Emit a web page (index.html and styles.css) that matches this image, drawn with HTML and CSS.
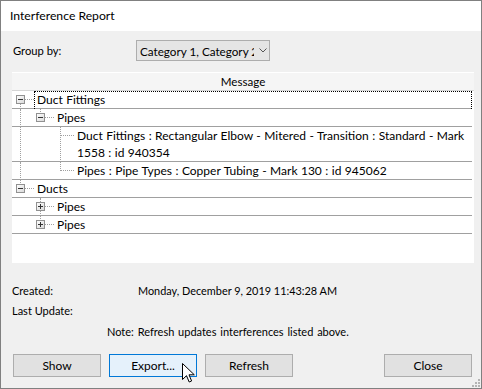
FILE: index.html
```html
<!DOCTYPE html>
<html lang="en">
<head>
    <meta charset="UTF-8">
    <title>Interference Report</title>
    <link rel="stylesheet" href="styles.css">
</head>
<body>
    <div class="window">
        <div class="titlebar">Interference Report</div>

        <div class="content">
            <div class="group-row">
                <span class="group-label">Group by:</span>
                <div class="combo">
                    <span class="combo-text">Category 1, Category 2</span>
                    <svg class="chevron" width="8" height="5" viewBox="0 0 8 5"><polyline points="0.5,0.5 4,4 7.5,0.5" fill="none" stroke="#555" stroke-width="1"/></svg>
                </div>
            </div>

            <div class="listbox">
                <div class="list-header">Message</div>
                <div class="tree">
                    <div class="row">
                        <span class="tc down h"><svg class="toggle" width="9" height="9" viewBox="0 0 9 9"><use href="#box"/><path d="M2 4.5h5" stroke="#333"/></svg></span>
                        <span class="lbl focus">Duct Fittings</span>
                    </div>
                    <div class="row">
                        <span class="tc full"></span>
                        <span class="tc up h"><svg class="toggle" width="9" height="9" viewBox="0 0 9 9"><use href="#box"/><path d="M2 4.5h5" stroke="#333"/></svg></span>
                        <span class="lbl">Pipes</span>
                    </div>
                    <div class="row">
                        <span class="tc full"></span>
                        <span class="tc"></span>
                        <span class="tc full h"></span>
                        <span class="lbl">Duct Fittings : Rectangular Elbow - Mitered - Transition : Standard - Mark<br>1558 : id 940354</span>
                    </div>
                    <div class="row">
                        <span class="tc full"></span>
                        <span class="tc"></span>
                        <span class="tc up h"></span>
                        <span class="lbl">Pipes : Pipe Types : Copper Tubing - Mark 130 : id 945062</span>
                    </div>
                    <div class="row">
                        <span class="tc up h"><svg class="toggle" width="9" height="9" viewBox="0 0 9 9"><use href="#box"/><path d="M2 4.5h5" stroke="#333"/></svg></span>
                        <span class="lbl">Ducts</span>
                    </div>
                    <div class="row">
                        <span class="tc"></span>
                        <span class="tc full h"><svg class="toggle" width="9" height="9" viewBox="0 0 9 9"><use href="#box"/><path d="M2 4.5h5M4.5 2v5" stroke="#333"/></svg></span>
                        <span class="lbl">Pipes</span>
                    </div>
                    <div class="row">
                        <span class="tc"></span>
                        <span class="tc up h"><svg class="toggle" width="9" height="9" viewBox="0 0 9 9"><use href="#box"/><path d="M2 4.5h5M4.5 2v5" stroke="#333"/></svg></span>
                        <span class="lbl">Pipes</span>
                    </div>
                </div>
            </div>

            <div class="info">
                <div class="info-row"><span class="info-label">Created:</span><span class="info-date">Monday, December 9, 2019 11:43:28 AM</span></div>
                <div class="info-row"><span class="info-label">Last Update:</span></div>
                <div class="note">Note: Refresh updates interferences listed above.</div>
            </div>

            <div class="buttons">
                <button class="btn">Show</button>
                <button class="btn hot">Export...</button>
                <button class="btn">Refresh</button>
                <button class="btn close">Close</button>
            </div>
        </div>

        <!-- mouse pointer over Export -->
        <svg class="cursor" width="13" height="20" viewBox="0 0 13 20">
            <path d="M0.5 0.5V16.5L4.5 12.7L7.2 19L9.6 18L7 11.8H12.3Z" fill="#fff" stroke="#000" stroke-linejoin="miter"/>
        </svg>

        <svg class="grip" width="8" height="8" viewBox="0 0 8 8" fill="#b4b4b4">
            <rect x="6" y="0" width="2" height="2"/>
            <rect x="3" y="3" width="2" height="2"/><rect x="6" y="3" width="2" height="2"/>
            <rect x="0" y="6" width="2" height="2"/><rect x="3" y="6" width="2" height="2"/><rect x="6" y="6" width="2" height="2"/>
        </svg>
    </div>

    <svg width="0" height="0" style="position:absolute">
        <defs>
            <linearGradient id="boxfill" x1="0" y1="0" x2="1" y2="1">
                <stop offset="0" stop-color="#fff"/>
                <stop offset="1" stop-color="#d8d8d8"/>
            </linearGradient>
            <rect id="box" x="0.5" y="0.5" width="8" height="8" fill="url(#boxfill)" stroke="#919191"/>
        </defs>
    </svg>
</body>
</html>
```

FILE: styles.css
```css
* {
    margin: 0;
    padding: 0;
    box-sizing: border-box;
}

body {
    font-family: Lato, "Noto Sans", sans-serif;
    font-size: 12px;
    color: #000;
    background: #fff;
}

.window {
    position: relative;
    width: 482px;
    height: 389px;
    border: 1px solid #808080;
    background: #f0f0f0;
    display: flex;
    flex-direction: column;
    overflow: hidden;
}

.titlebar {
    height: 30px;
    line-height: 30px;
    padding-left: 9px;
    background: #fff;
    font-size: 12.2px;
}

.content {
    flex: 1;
    display: flex;
    flex-direction: column;
    padding: 0 7px 0 11px;
}

/* group by */
.group-row {
    display: flex;
    align-items: center;
    margin-top: 9px;
    height: 21px;
}

.group-label {
    width: 124px;
    font-size: 11.2px;
    padding-left: 1px;
}

.combo {
    width: 134px;
    height: 21px;
    border: 1px solid #adadad;
    background: #e5e5e5;
    display: flex;
    align-items: center;
    padding-left: 3px;
}

.combo-text {
    width: 114px;
    overflow: hidden;
    white-space: nowrap;
    font-size: 11.7px;
}

.chevron {
    margin-left: 5px;
}

/* list */
.listbox {
    margin-top: 11px;
    height: 191px;
    background: #fff;
}

.list-header {
    height: 19px;
    line-height: 18px;
    text-align: center;
    background: #f5f5f5;
    border-top: 1px solid #fff;
    border-bottom: 1px solid #d5d5d5;
    font-size: 11.6px;
}

.tree {
    margin-right: 2px;
}

.row {
    display: flex;
    align-items: stretch;
    border-bottom: 1px solid #a0a0a0;
    line-height: 17px;
    white-space: nowrap;
    word-spacing: 0.4px;
}

.tc {
    position: relative;
    flex: none;
    width: 20px;
}

.tc.up::before,
.tc.down::before,
.tc.full::before {
    content: "";
    position: absolute;
    left: 8px;
    border-left: 1px dotted #a0a0a0;
}

.tc.up::before {
    top: 0;
    height: 9px;
}

.tc.down::before {
    top: 9px;
    bottom: -1px;
}

.tc.full::before {
    top: 0;
    bottom: -1px;
}

.tc.h::after {
    content: "";
    position: absolute;
    left: 9px;
    top: 8px;
    width: 13px;
    border-top: 1px dotted #a0a0a0;
}

.toggle {
    position: absolute;
    left: 4px;
    top: 4px;
    z-index: 1;
}

.lbl {
    position: relative;
    flex: 1;
    margin-left: 2px;
    padding-left: 3px;
}

/* focus rectangle of the current item */
.lbl.focus::before {
    content: "";
    position: absolute;
    top: 0;
    left: 0;
    right: 0;
    bottom: -1px;
    border: 1px dotted #000;
    border-bottom: 0;
}

/* info */
.info {
    margin-top: 18px;
    line-height: 20px;
    font-size: 11px;
}

.info-row {
    display: flex;
    height: 20px;
}

.info-label {
    width: 126px;
}

.info-date {
    font-size: 10.9px;
}

.note {
    margin-top: 1px;
    padding-left: 95px;
    word-spacing: 1px;
}

/* buttons */
.buttons {
    display: flex;
    gap: 8px;
    margin-top: 12px;
    padding-left: 1px;
    padding-right: 2px;
}

.btn {
    width: 88px;
    height: 23px;
    border: 1px solid #adadad;
    background: #e1e1e1;
    font: inherit;
    color: #000;
}

.btn.hot {
    border-color: #0078d7;
    background: #e5f1fb;
}

.btn.close {
    margin-left: auto;
}

.cursor {
    position: absolute;
    left: 181px;
    top: 362px;
}

.grip {
    position: absolute;
    right: 1px;
    bottom: 1px;
}
```
